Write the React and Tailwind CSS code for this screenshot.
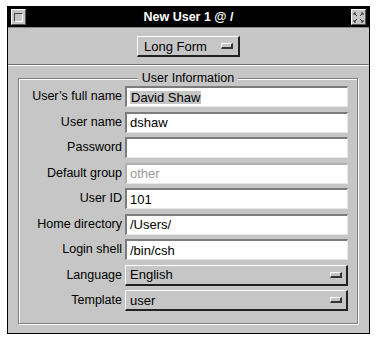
import React from "react";

const rows = [
    { label: "User\u2019s full name", value: "David Shaw", kind: "text", selected: true },
    { label: "User name", value: "dshaw", kind: "text" },
    { label: "Password", value: "", kind: "text" },
    { label: "Default group", value: "other", kind: "disabled" },
    { label: "User ID", value: "101", kind: "text" },
    { label: "Home directory", value: "/Users/", kind: "text" },
    { label: "Login shell", value: "/bin/csh", kind: "text" },
    { label: "Language", value: "English", kind: "popup" },
    { label: "Template", value: "user", kind: "popup" },
];

function Knob() {
    return (
        <span className="block w-[12px] h-[6px] bg-[#c6c6c6] border-t border-l border-white border-b-2 border-r-2 border-b-[#333] border-r-[#333]" />
    );
}

function Field({ row }) {
    if (row.kind === "popup") {
        return (
            <div className="h-[21px] flex items-center justify-between pl-[4px] pr-[4px] bg-[#c6c6c6] border-t border-l border-white border-b-2 border-r-2 border-b-[#222] border-r-[#222]">
                <span>{row.value}</span>
                <Knob />
            </div>
        );
    }
    return (
        <div
            className={
                "h-[21px] flex items-center pl-[3px] border-t-2 border-l-2 border-b border-r border-b-[#e8e8e8] border-r-[#e8e8e8] " +
                (row.kind === "disabled"
                    ? "bg-white border-t-[#b0b0b0] border-l-[#b0b0b0] text-[#9a9a9a]"
                    : "bg-white border-t-[#7c7c7c] border-l-[#7c7c7c] text-black")
            }
        >
            {row.selected ? <span className="bg-[#c6c6c6] px-[1px]">{row.value}</span> : row.value}
        </div>
    );
}

export default function App() {
    return (
        <div
            className="w-[377px] h-[344px] bg-white pt-[6px] pl-[7px]"
            style={{ fontFamily: "'Liberation Sans', Arial, sans-serif" }}
        >
            <div className="w-[363px] h-[328px] border border-black bg-[#c6c6c6] flex flex-col text-[13px] text-black leading-none">
                {/* title bar */}
                <div className="h-[20px] bg-black flex items-center justify-between px-[3px] shrink-0">
                    <div className="w-[15px] h-[16px] bg-[#c6c6c6] border-t border-l border-white border-b border-r border-b-[#555] border-r-[#555] flex items-center justify-center">
                        <div className="w-[9px] h-[9px] border border-[#444] border-b-white border-r-white" />
                    </div>
                    <span className="text-white font-bold text-[12.5px]">New User 1 @ /</span>
                    <div className="w-[15px] h-[16px] bg-[#c6c6c6] border-t border-l border-white border-b border-r border-b-[#555] border-r-[#555] flex items-center justify-center">
                        <svg width="11" height="11" viewBox="0 0 11 11" fill="none" stroke="#333" strokeWidth="1">
                            <path d="M1 1 L4 4 M1 3 V1 H3" />
                            <path d="M10 1 L7 4 M8 1 H10 V3" />
                            <path d="M1 10 L4 7 M1 8 V10 H3" />
                            <path d="M10 10 L7 7 M8 10 H10 V8" />
                        </svg>
                    </div>
                </div>
                <div className="h-[1px] bg-[#8a8a8a]" />

                {/* form type popup */}
                <div className="flex justify-center pt-[8px] pb-[7px]">
                    <div className="w-[103px] h-[21px] flex items-center justify-between pl-[6px] pr-[5px] bg-[#c6c6c6] border-t border-l border-white border-b-2 border-r-2 border-b-[#222] border-r-[#222]">
                        <span>Long Form</span>
                        <Knob />
                    </div>
                </div>
                <div className="h-[1px] bg-[#6e6e6e]" />
                <div className="h-[1px] bg-white" />

                {/* group box */}
                <div className="pl-[10px] pr-[11px] pt-[12px]">
                    <div className="relative border border-[#808080] shadow-[inset_1px_1px_0_#ffffff,1px_1px_0_#ffffff] pt-[7px] pb-[12px] pr-[9px]">
                        <span className="absolute left-1/2 -translate-x-1/2 -top-[7px] bg-[#c6c6c6] px-[4px] text-[12.5px]">
                            User Information
                        </span>
                        <div className="grid grid-cols-[106px_1fr] gap-y-[4.5px] items-center">
                            {rows.map(r => (
                                <React.Fragment key={r.label}>
                                    <span className="text-right pr-[3px] text-[12.5px]">{r.label}</span>
                                    <Field row={r} />
                                </React.Fragment>
                            ))}
                        </div>
                    </div>
                </div>
            </div>
        </div>
    );
}
